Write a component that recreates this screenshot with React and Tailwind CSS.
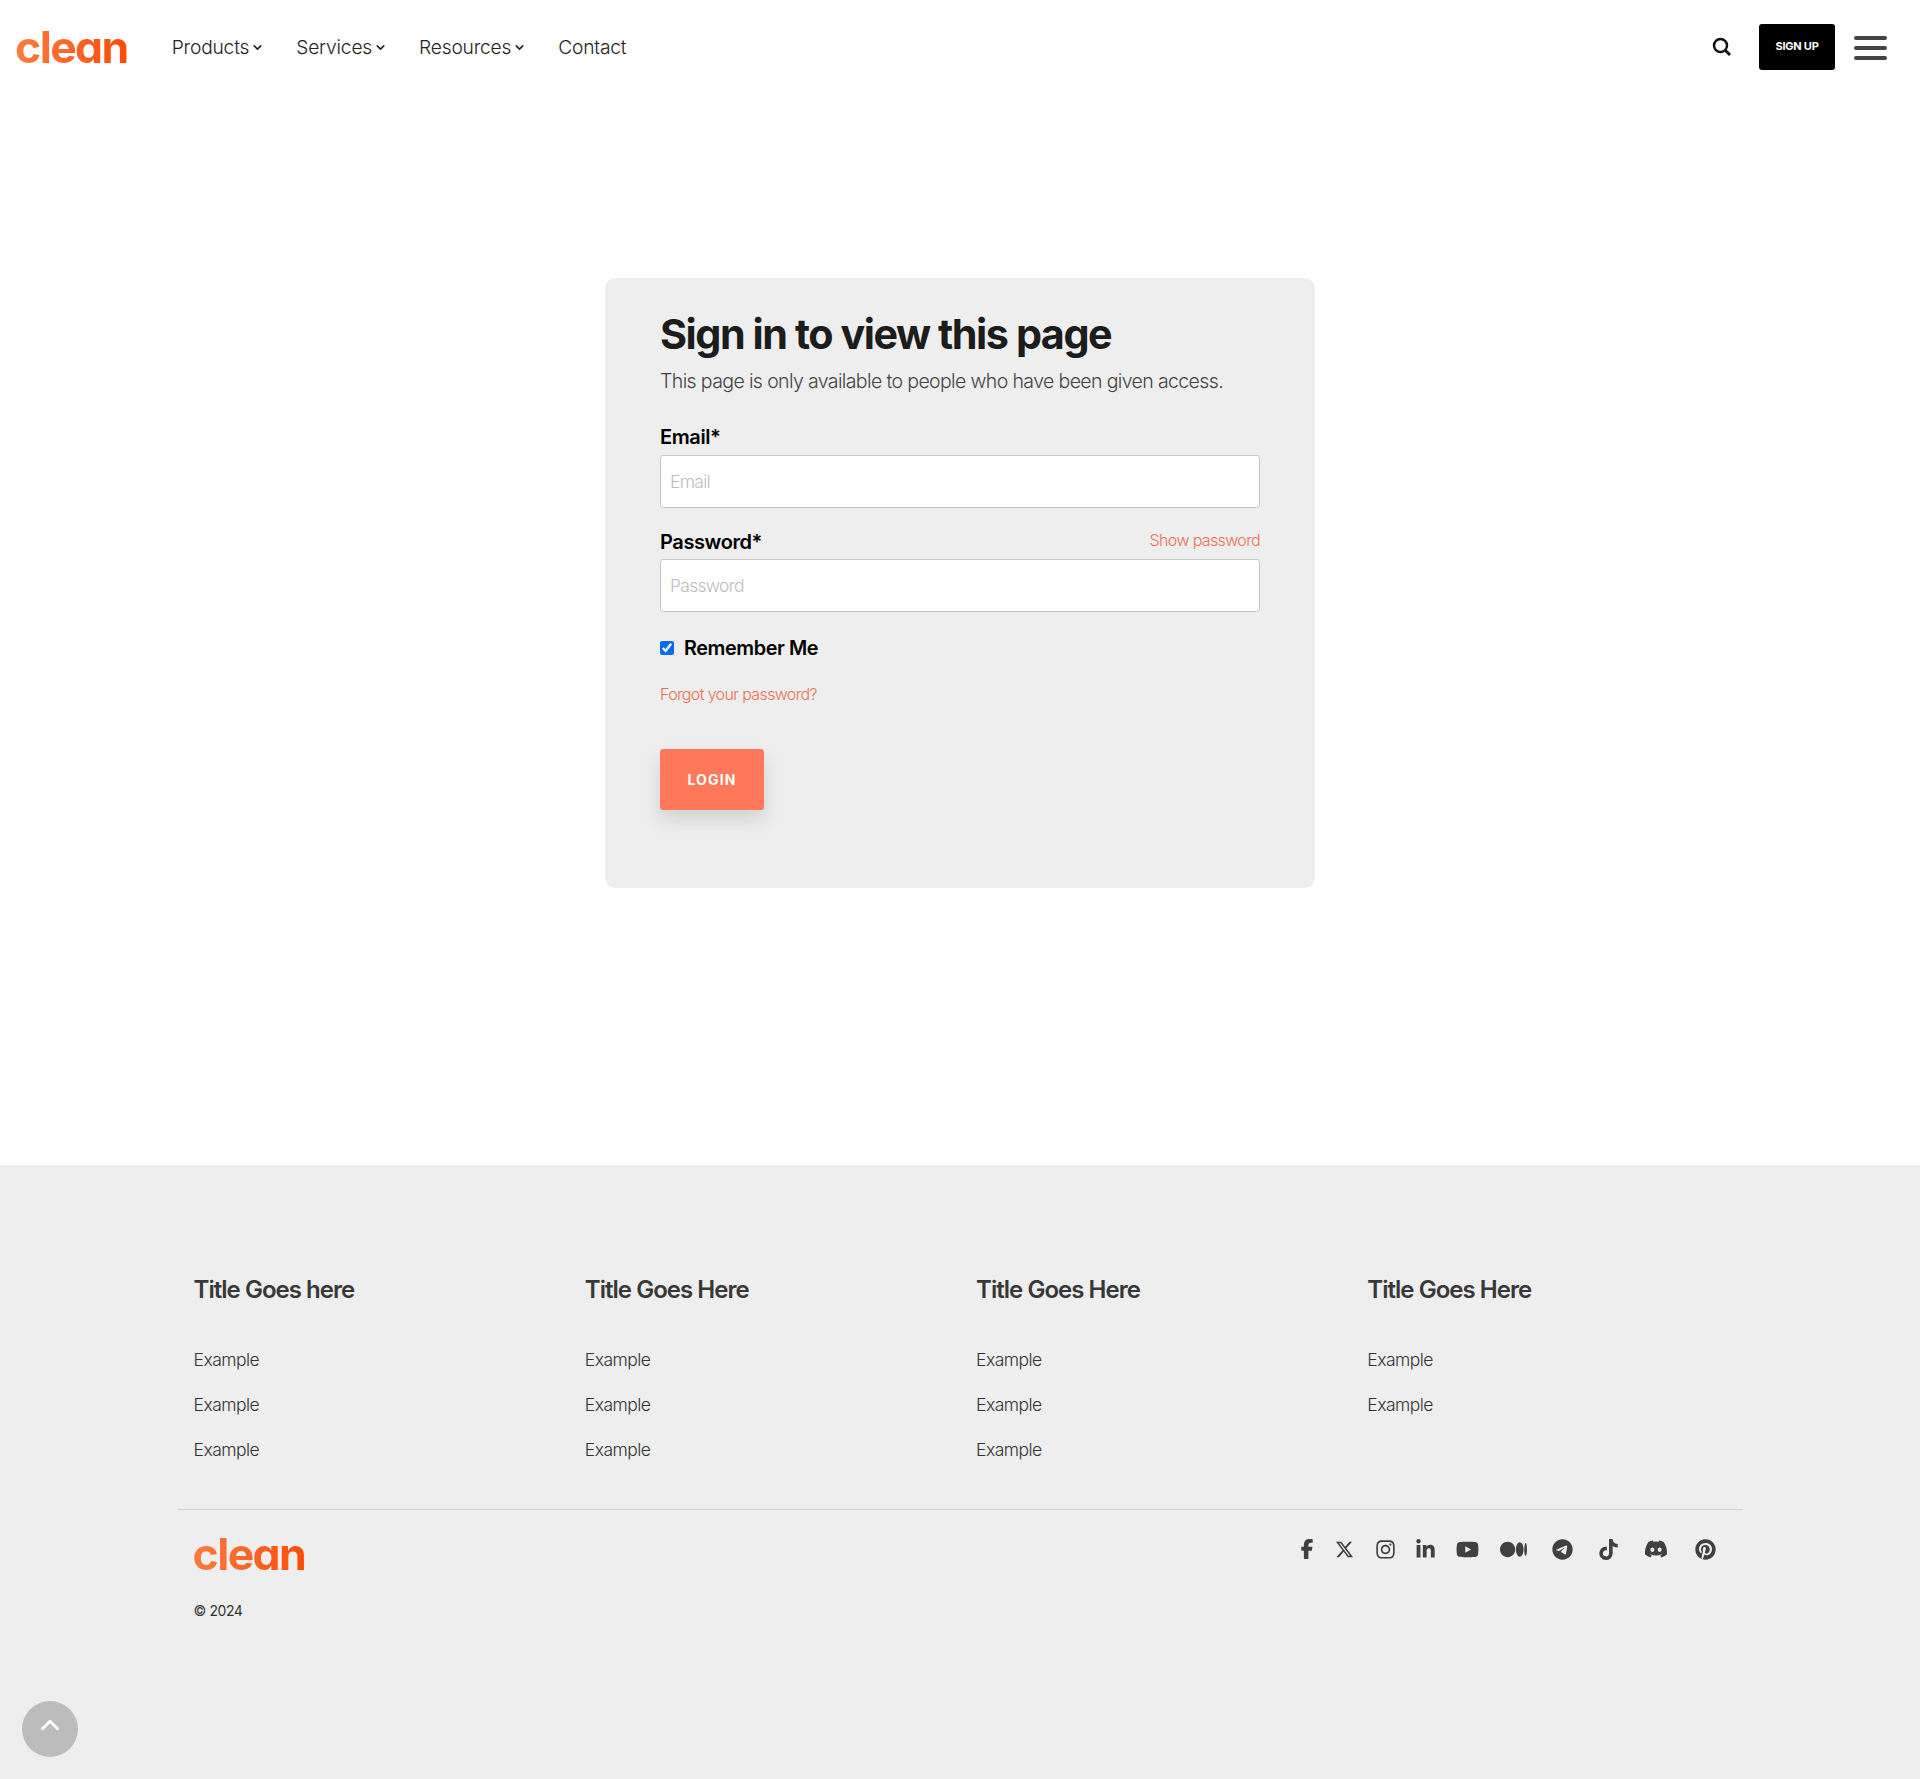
import { ChevronDown, ChevronUp } from "lucide-react";
import {
  FaDiscord,
  FaFacebookF,
  FaInstagram,
  FaLinkedinIn,
  FaMedium,
  FaPinterest,
  FaTelegram,
  FaTiktok,
  FaXTwitter,
  FaYoutube,
} from "react-icons/fa6";

const navItems = [
  { label: "Products", hasMenu: true },
  { label: "Services", hasMenu: true },
  { label: "Resources", hasMenu: true },
  { label: "Contact", hasMenu: false },
];

const footerColumns = [
  { title: "Title Goes here", links: ["Example", "Example", "Example"] },
  { title: "Title Goes Here", links: ["Example", "Example", "Example"] },
  { title: "Title Goes Here", links: ["Example", "Example", "Example"] },
  { title: "Title Goes Here", links: ["Example", "Example"] },
];

// slot widths are uneven in the design, icons sit centered in them
const socials = [
  { Icon: FaFacebookF, size: 20, slot: "w-[32px]" },
  { Icon: FaXTwitter, size: 19, slot: "w-[44px]" },
  { Icon: FaInstagram, size: 21, slot: "w-[38px]" },
  { Icon: FaLinkedinIn, size: 21, slot: "w-[41px]" },
  { Icon: FaYoutube, size: 23, slot: "w-[44px]" },
  { Icon: FaMedium, size: 27, slot: "w-[48px]" },
  { Icon: FaTelegram, size: 21, slot: "w-[49px]" },
  { Icon: FaTiktok, size: 21, slot: "w-[44px]" },
  { Icon: FaDiscord, size: 24, slot: "w-[51px]" },
  { Icon: FaPinterest, size: 21, slot: "w-[48px]" },
];

function Logo() {
  return (
    <span className="block bg-gradient-to-r from-[#ff7a3d] to-[#fb4b00] bg-clip-text text-[44.5px] leading-[46px] font-bold tracking-[-0.035em] text-transparent [font-feature-settings:'cv11']">
      clean
    </span>
  );
}

function Header() {
  return (
    <header className="flex h-[93px] items-center justify-between pr-[33px] pl-[15px]">
      <div className="flex items-center">
        <Logo />
        <nav className="mt-[2px] ml-[44px] flex items-center gap-[32px] text-[19.2px] font-light tracking-[-0.01em] text-[#222]">
          {navItems.map((item) => (
            <a key={item.label} className="flex items-center gap-[2px]">
              {item.label}
              {item.hasMenu && <ChevronDown size={13} strokeWidth={3} />}
            </a>
          ))}
        </nav>
      </div>
      <div className="flex items-center">
        <svg width="20" height="20" viewBox="0 0 20 20" fill="none" stroke="#111">
          <circle cx="8.5" cy="8.5" r="6.5" strokeWidth="2.5" />
          <path d="M13.5 13.5L18 18" strokeWidth="3" />
        </svg>
        <button className="ml-[27px] h-[46px] w-[76px] rounded-[3px] bg-black text-[11px] font-bold tracking-[-0.02em] text-white">
          SIGN UP
        </button>
        <div className="mt-[3px] ml-[19px] flex w-[33px] flex-col gap-[6.5px]">
          <span className="h-[3.5px] rounded-full bg-[#444]"></span>
          <span className="h-[3.5px] rounded-full bg-[#444]"></span>
          <span className="h-[3.5px] rounded-full bg-[#444]"></span>
        </div>
      </div>
    </header>
  );
}

function LoginCard() {
  return (
    <section className="mx-auto h-[610px] w-[710px] rounded-[10px] bg-[#eeeeee] px-[55px] pt-[30px]">
      <h1 className="text-[41.3px] leading-[52px] font-bold tracking-[-0.035em] text-[#1c1c1c]">
        Sign in to view this page
      </h1>
      <p className="mt-[7px] text-[19.5px] leading-[28px] font-light tracking-[-0.032em] text-[#444]">
        This page is only available to people who have been given access.
      </p>

      <label className="mt-[30px] block text-[20px] leading-[24px] font-semibold tracking-[-0.02em] text-black">
        Email*
      </label>
      <input
        type="email"
        placeholder="Email"
        className="mt-[6px] block h-[53px] w-full rounded-[3px] border border-[#c4c4c4] bg-white px-[9px] text-[17.5px] font-light tracking-[-0.04em] placeholder:text-[#bdbdbd]"
      />

      <div className="mt-[21px] flex items-end justify-between">
        <label className="text-[20px] leading-[24px] font-semibold tracking-[-0.02em] text-black">
          Password*
        </label>
        <a className="pb-[3px] text-[16px] leading-[22px] font-light tracking-[-0.04em] text-[#ef6f50]">
          Show password
        </a>
      </div>
      <input
        type="password"
        placeholder="Password"
        className="mt-[5px] block h-[53px] w-full rounded-[3px] border border-[#c4c4c4] bg-white px-[9px] text-[17.5px] font-light tracking-[-0.04em] placeholder:text-[#bdbdbd]"
      />

      <label className="mt-[24px] flex items-center gap-[10px] text-[19.8px] leading-[24px] font-semibold tracking-[-0.02em] text-black">
        <input type="checkbox" defaultChecked className="h-[14px] w-[14px] accent-[#0b6bf0]" />
        Remember Me
      </label>

      <a className="mt-[23px] block text-[16px] leading-[22px] font-light tracking-[-0.04em] text-[#ef6f50]">
        Forgot your password?
      </a>

      <button className="mt-[44px] h-[61px] w-[104px] rounded-[3px] bg-[#ff7859] text-[14px] font-bold tracking-[0.08em] text-white shadow-[0_10px_20px_rgba(0,0,0,0.12)]">
        LOGIN
      </button>
    </section>
  );
}

function Footer() {
  return (
    <footer className="h-[614px] bg-[#eeeeee] pt-[108px]">
      <div className="mx-auto w-[1565px]">
        <div className="grid h-[237px] grid-cols-4 border-b border-[#cfcfcf]">
          {footerColumns.map((col, i) => (
            <div key={i} className="px-4">
              <h4 className="text-[24px] leading-[34px] font-semibold tracking-[-0.04em] text-[#383838]">
                {col.title}
              </h4>
              <ul className="mt-[41px] flex flex-col gap-[21px] text-[17.5px] leading-[24px] font-light tracking-[-0.03em] text-[#333]">
                {col.links.map((link, j) => (
                  <li key={j}>{link}</li>
                ))}
              </ul>
            </div>
          ))}
        </div>
        <div className="flex items-start justify-between pt-[21px] pr-[13px] pl-[15px]">
          <div>
            <Logo />
            <p className="mt-[24px] ml-px text-[14px] leading-[20px] font-normal tracking-[-0.03em] text-[#333]">© 2024</p>
          </div>
          <div className="mt-[3px] flex h-[30px] items-center text-[#404040]">
            {socials.map(({ Icon, size, slot }, i) => (
              <span key={i} className={`flex justify-center ${slot}`}>
                <Icon size={size} />
              </span>
            ))}
          </div>
        </div>
      </div>
    </footer>
  );
}

export default function App() {
  return (
    <div className="relative min-h-[1779px] bg-white font-['Inter',sans-serif]">
      <Header />
      <main className="h-[1072px] pt-[185px]">
        <LoginCard />
      </main>
      <Footer />
      <button className="absolute bottom-[22px] left-[22px] flex h-[56px] w-[56px] items-start justify-center rounded-full bg-[#bcbcbc] pt-[9px] text-white">
        <ChevronUp size={30} strokeWidth={2.25} />
      </button>
    </div>
  );
}
